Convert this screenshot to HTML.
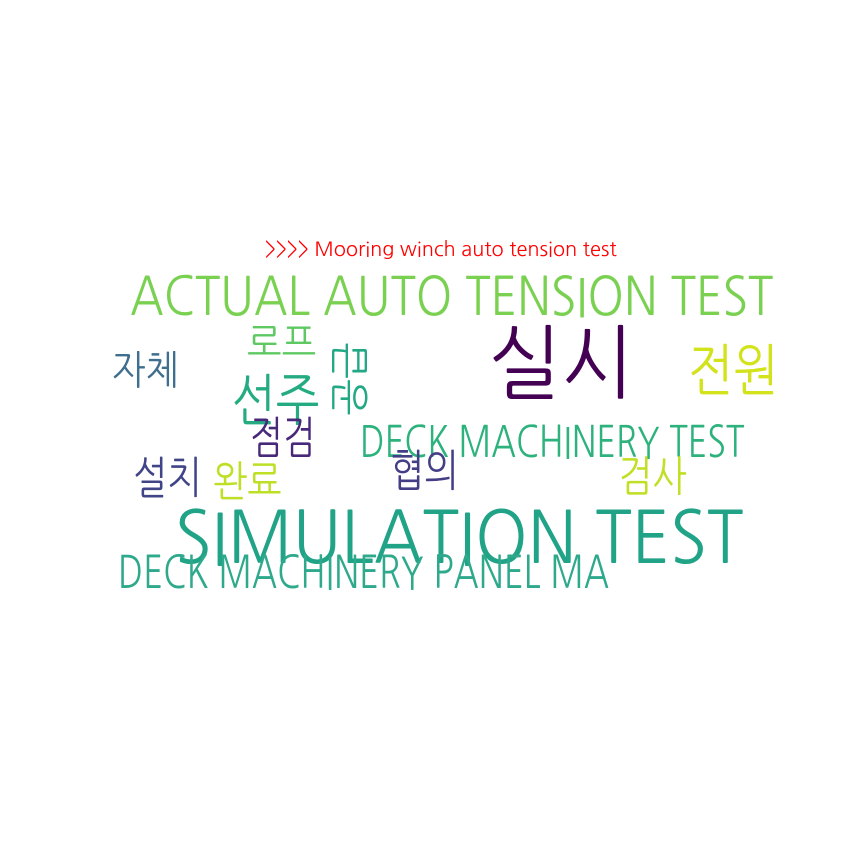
<!DOCTYPE html>
<html><head><meta charset="utf-8"><style>
body{margin:0;width:864px;height:864px;background:#fff;position:relative;overflow:hidden;font-family:"NanumGothic","Liberation Sans",sans-serif}
div{position:absolute;white-space:nowrap;line-height:1;transform-origin:0 0}
</style></head><body>
<div style="left:265px;top:239px;font-size:20px;color:#ff0000">&gt;&gt;&gt;&gt; Mooring winch auto tension test</div>
<div style="left:130px;top:270px;font-size:53px;color:#7ad151;transform:scaleX(0.875)">ACTUAL AUTO TENSION TEST</div>
<div style="left:489px;top:323px;font-size:80px;color:#440154;transform:scaleX(0.96)">실시</div>
<div style="left:688px;top:343px;font-size:56px;color:#d2e21b;transform:scaleX(0.86)">전원</div>
<div style="left:112px;top:350px;font-size:40px;color:#3e6f8e;transform:scaleX(0.89)">자체</div>
<div style="left:247px;top:323px;font-size:40px;color:#5ec962;transform:scaleX(0.92)">로프</div>
<div style="left:232px;top:373px;font-size:56px;color:#25ab82;transform:scaleX(0.83)">선주</div>
<div style="left:350px;top:379px;font-size:39px;color:#22a884;transform:translate(-50%,-50%) rotate(-90deg);transform-origin:50% 50%">공급</div>
<div style="left:250px;top:416px;font-size:44px;color:#482878;transform:scaleX(0.79)">점검</div>
<div style="left:360px;top:421px;font-size:43px;color:#2db27d;transform:scaleX(0.79)">DECK MACHINERY TEST</div>
<div style="left:133px;top:456px;font-size:44px;color:#414487;transform:scaleX(0.83)">설치</div>
<div style="left:213px;top:461px;font-size:42px;color:#bddf26;transform:scaleX(0.87)">완료</div>
<div style="left:390px;top:449px;font-size:44px;color:#433e85;transform:scaleX(0.83)">협의</div>
<div style="left:618px;top:456px;font-size:42px;color:#c0df25;transform:scaleX(0.87)">검사</div>
<div style="left:175px;top:502px;font-size:72px;color:#20a386;transform:scaleX(0.93)">SIMULATION TEST</div>
<div style="left:118px;top:550px;font-size:45px;color:#2fa98c;transform:scaleX(0.77)">DECK MACHINERY PANEL MA</div>
</body></html>
